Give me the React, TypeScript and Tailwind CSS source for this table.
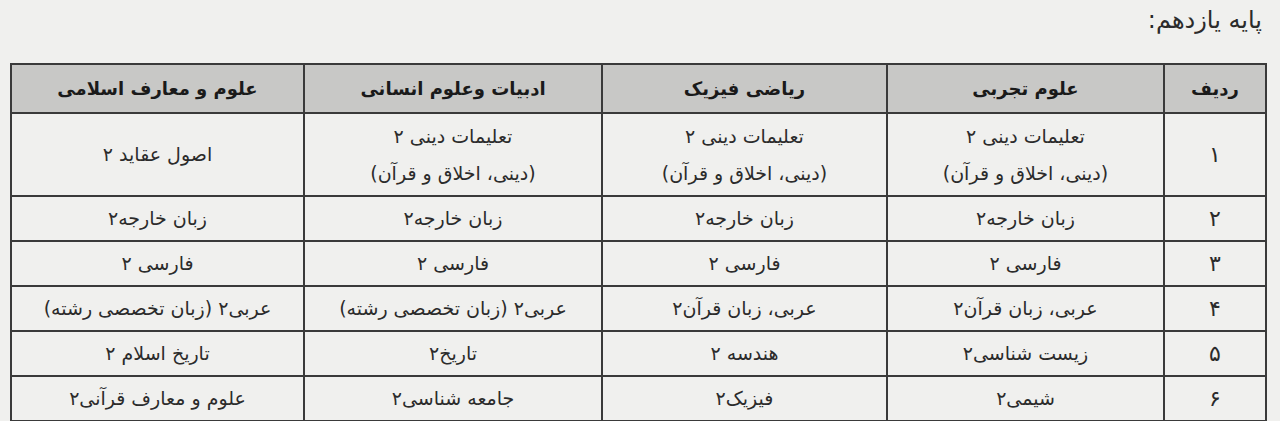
const headers = ["ردیف", "علوم تجربی", "ریاضی فیزیک", "ادبیات وعلوم انسانی", "علوم و معارف اسلامی"]

const widths = ["w-[102px]", "w-[277px]", "w-[285px]", "w-[298px]", "w-[293px]"]

const rows: string[][] = [
  ["۱", "تعلیمات دینی ۲\n(دینی، اخلاق و قرآن)", "تعلیمات دینی ۲\n(دینی، اخلاق و قرآن)", "تعلیمات دینی ۲\n(دینی، اخلاق و قرآن)", "اصول عقاید ۲"],
  ["۲", "زبان خارجه۲", "زبان خارجه۲", "زبان خارجه۲", "زبان خارجه۲"],
  ["۳", "فارسی ۲", "فارسی ۲", "فارسی ۲", "فارسی ۲"],
  ["۴", "عربی، زبان قرآن۲", "عربی، زبان قرآن۲", "عربی۲ (زبان تخصصی رشته)", "عربی۲ (زبان تخصصی رشته)"],
  ["۵", "زیست شناسی۲", "هندسه ۲", "تاریخ۲", "تاریخ اسلام ۲"],
  ["۶", "شیمی۲", "فیزیک۲", "جامعه شناسی۲", "علوم و معارف قرآنی۲"],
]

export default function App() {
  return (
    <div
      dir="rtl"
      className="h-[421px] w-[1280px] overflow-hidden bg-[#f0f0ee] text-[#2b2b2b]"
      style={{ fontFamily: '"DejaVu Sans", sans-serif' }}
    >
      {/* Title */}
      <div className="pr-[18px] pt-[4px] text-[24px] leading-[32px]">پایه یازدهم:</div>

      {/* Table */}
      <table className="mr-[13px] mt-[27px] table-fixed border-collapse border-2 border-[#3a3a3a]">
        <thead>
          <tr className="h-[49px] bg-[#c8c8c6]">
            {headers.map((h, i) => (
              <th
                key={h}
                className={`${widths[i]} border-2 border-[#3a3a3a] text-center text-[18px] font-bold text-[#1a1a1a]`}
              >
                {h}
              </th>
            ))}
          </tr>
        </thead>
        <tbody>
          {rows.map((row, r) => (
            <tr key={r} className={r === 0 ? "h-[83px]" : "h-[45px]"}>
              {row.map((cell, c) => (
                <td
                  key={c}
                  className={`border-2 border-[#3a3a3a] p-0 text-center leading-[37px] ${
                    c === 0 ? "text-[22px]" : "text-[19px]"
                  }`}
                >
                  {cell.split("\n").map((line, k) => (
                    <div key={k}>{line}</div>
                  ))}
                </td>
              ))}
            </tr>
          ))}
        </tbody>
      </table>
    </div>
  )
}
